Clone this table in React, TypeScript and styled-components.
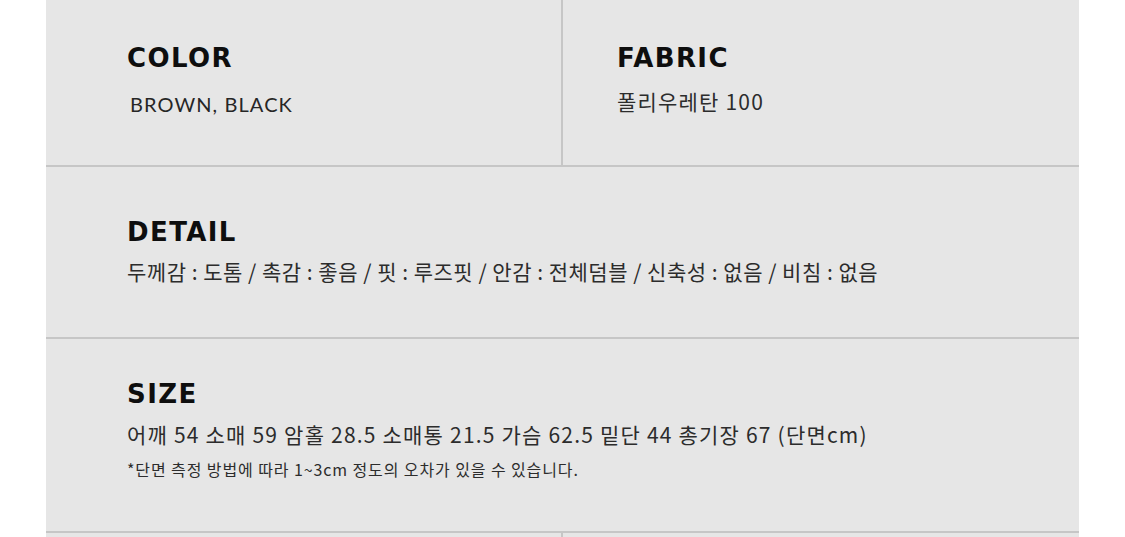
import React from "react";
import styled, { createGlobalStyle } from "styled-components";

const Global = createGlobalStyle`
  html, body { margin: 0; padding: 0; background: #ffffff; }
  body { width: 1125px; height: 537px; overflow: hidden; }
`;

const Sheet = styled.div`
  margin-left: 46px;
  width: 1033px;
  background: #e6e6e6;
  display: flex;
  flex-direction: column;
`;

const Row = styled.div<{ $h: number; $split?: boolean; $open?: boolean }>`
  display: grid;
  grid-template-columns: ${(p) => (p.$split ? "517px 1fr" : "1fr")};
  height: ${(p) => p.$h}px;
  border-bottom: ${(p) => (p.$open ? "none" : "2px solid #c6c6c6")};
`;

const Cell = styled.div<{ $pl: number; $pt: number; $divider?: boolean }>`
  padding-left: ${(p) => p.$pl}px;
  padding-top: ${(p) => p.$pt}px;
  border-right: ${(p) => (p.$divider ? "2px solid #c6c6c6" : "none")};
  display: flex;
  flex-direction: column;
  align-items: flex-start;
`;

const Heading = styled.h2`
  margin: 0;
  font-family: "DejaVu Sans", "Liberation Sans", sans-serif;
  font-weight: 700;
  font-size: 26px;
  line-height: 30px;
  letter-spacing: 1.4px;
  color: #0e0e0e;
`;

const Latin = styled.div`
  margin-top: 19px;
  margin-left: 3px;
  font-family: "Lato", "Liberation Sans", sans-serif;
  font-size: 20px;
  line-height: 24px;
  letter-spacing: 1.1px;
  color: #262626;
`;

const Value = styled.div<{ $mt: number; $size?: number; $ls?: number }>`
  margin-top: ${(p) => p.$mt}px;
  font-family: "Noto Sans CJK KR", "Noto Sans", sans-serif;
  font-size: ${(p) => p.$size ?? 21}px;
  line-height: 1.2;
  letter-spacing: ${(p) => p.$ls ?? 0}px;
  color: #2c2c2c;
  white-space: nowrap;
`;

export default function App() {
  return (
    <>
      <Global />
      <Sheet>
        <Row $h={165} $split>
          <Cell $pl={81} $pt={43} $divider>
            <Heading>COLOR</Heading>
            <Latin>BROWN, BLACK</Latin>
          </Cell>
          <Cell $pl={54} $pt={43}>
            <Heading>FABRIC</Heading>
            <Value $mt={16} $ls={1.2}>폴리우레탄 100</Value>
          </Cell>
        </Row>
        <Row $h={170}>
          <Cell $pl={81} $pt={50}>
            <Heading>DETAIL</Heading>
            <Value $mt={12} $ls={0.5}>
              두께감 : 도톰 / 촉감 : 좋음 / 핏 : 루즈핏 / 안감 : 전체덤블 / 신축성 : 없음 / 비침 : 없음
            </Value>
          </Cell>
        </Row>
        <Row $h={192}>
          <Cell $pl={81} $pt={40}>
            <Heading>SIZE</Heading>
            <Value $mt={13} $ls={1.2}>
              어깨 54 소매 59 암홀 28.5 소매통 21.5 가슴 62.5 밑단 44 총기장 67 (단면cm)
            </Value>
            <Value $mt={13} $size={16} $ls={0.9}>
              *단면 측정 방법에 따라 1~3cm 정도의 오차가 있을 수 있습니다.
            </Value>
          </Cell>
        </Row>
        <Row $h={4} $split $open>
          <Cell $pl={81} $pt={0} $divider />
          <Cell $pl={54} $pt={0} />
        </Row>
      </Sheet>
    </>
  );
}
